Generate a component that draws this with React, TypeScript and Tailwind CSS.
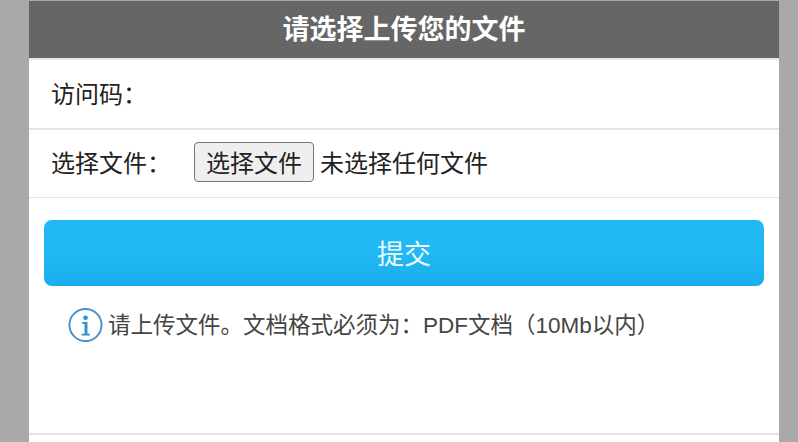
export default function App() {
  const font = { fontFamily: '"Liberation Sans", "Noto Sans CJK SC", sans-serif' };
  return (
    <div style={font} className="h-[442px] w-[798px] overflow-hidden bg-[#a9a9a9] px-[29px] pt-px pr-[19px]">
      <div className="h-[441px] w-[750px] bg-white">
        <div className="flex h-[57px] items-center justify-center bg-[#666666] pt-[2px] text-[27px] font-bold leading-none text-white">
          请选择上传您的文件
        </div>
        <div className="flex h-[70px] items-center border-t-2 border-[#e4e4e4] pl-[22px] pt-px text-[24px] leading-none text-[#222222]">
          访问码：
        </div>
        <div className="flex h-[69px] items-center border-t-2 border-[#e4e4e4] pb-[3px] pl-[22px] text-[24px] leading-none text-[#222222]">
          <span className="w-[143px] pt-[4px]">选择文件：</span>
          <button className="flex h-[40px] w-[120px] items-center justify-center rounded-[4px] border border-[#767676] bg-[#efefef] pt-[4px] text-[24px] leading-none text-[#222222]">
            选择文件
          </button>
          <span className="ml-[6px] pt-[4px]">未选择任何文件</span>
        </div>
        <div className="h-[236px] border-t border-[#e4e4e4] px-[15px] pt-[22px]">
          <button className="flex h-[66px] w-[720px] items-center justify-center rounded-[8px] bg-gradient-to-b from-[#20b9f4] from-50% to-[#1aaeec] pt-[5px] text-[27px] leading-none text-[#effaff]">
            提交
          </button>
          <div className="mt-[21px] flex items-center pl-[24px] text-[22.5px] leading-none text-[#444444]">
            <svg width="35" height="36" viewBox="0 0 36 36" className="mr-[5px] shrink-0">
              <circle cx="18" cy="18" r="16.5" fill="none" stroke="#4a90c8" strokeWidth="2" />
              <circle cx="18" cy="10.5" r="2.4" fill="#2f8fd0" />
              <path d="M14.5 15h5.5v12h2.5v1.8h-8.5V27H17V16.8h-2.5z" fill="#2f8fd0" />
            </svg>
            <span className="pt-[2px]">请上传文件。文档格式必须为：PDF文档（10Mb以内）</span>
          </div>
        </div>
        <div className="border-t-2 border-[#e4e4e4]" />
      </div>
    </div>
  );
}
